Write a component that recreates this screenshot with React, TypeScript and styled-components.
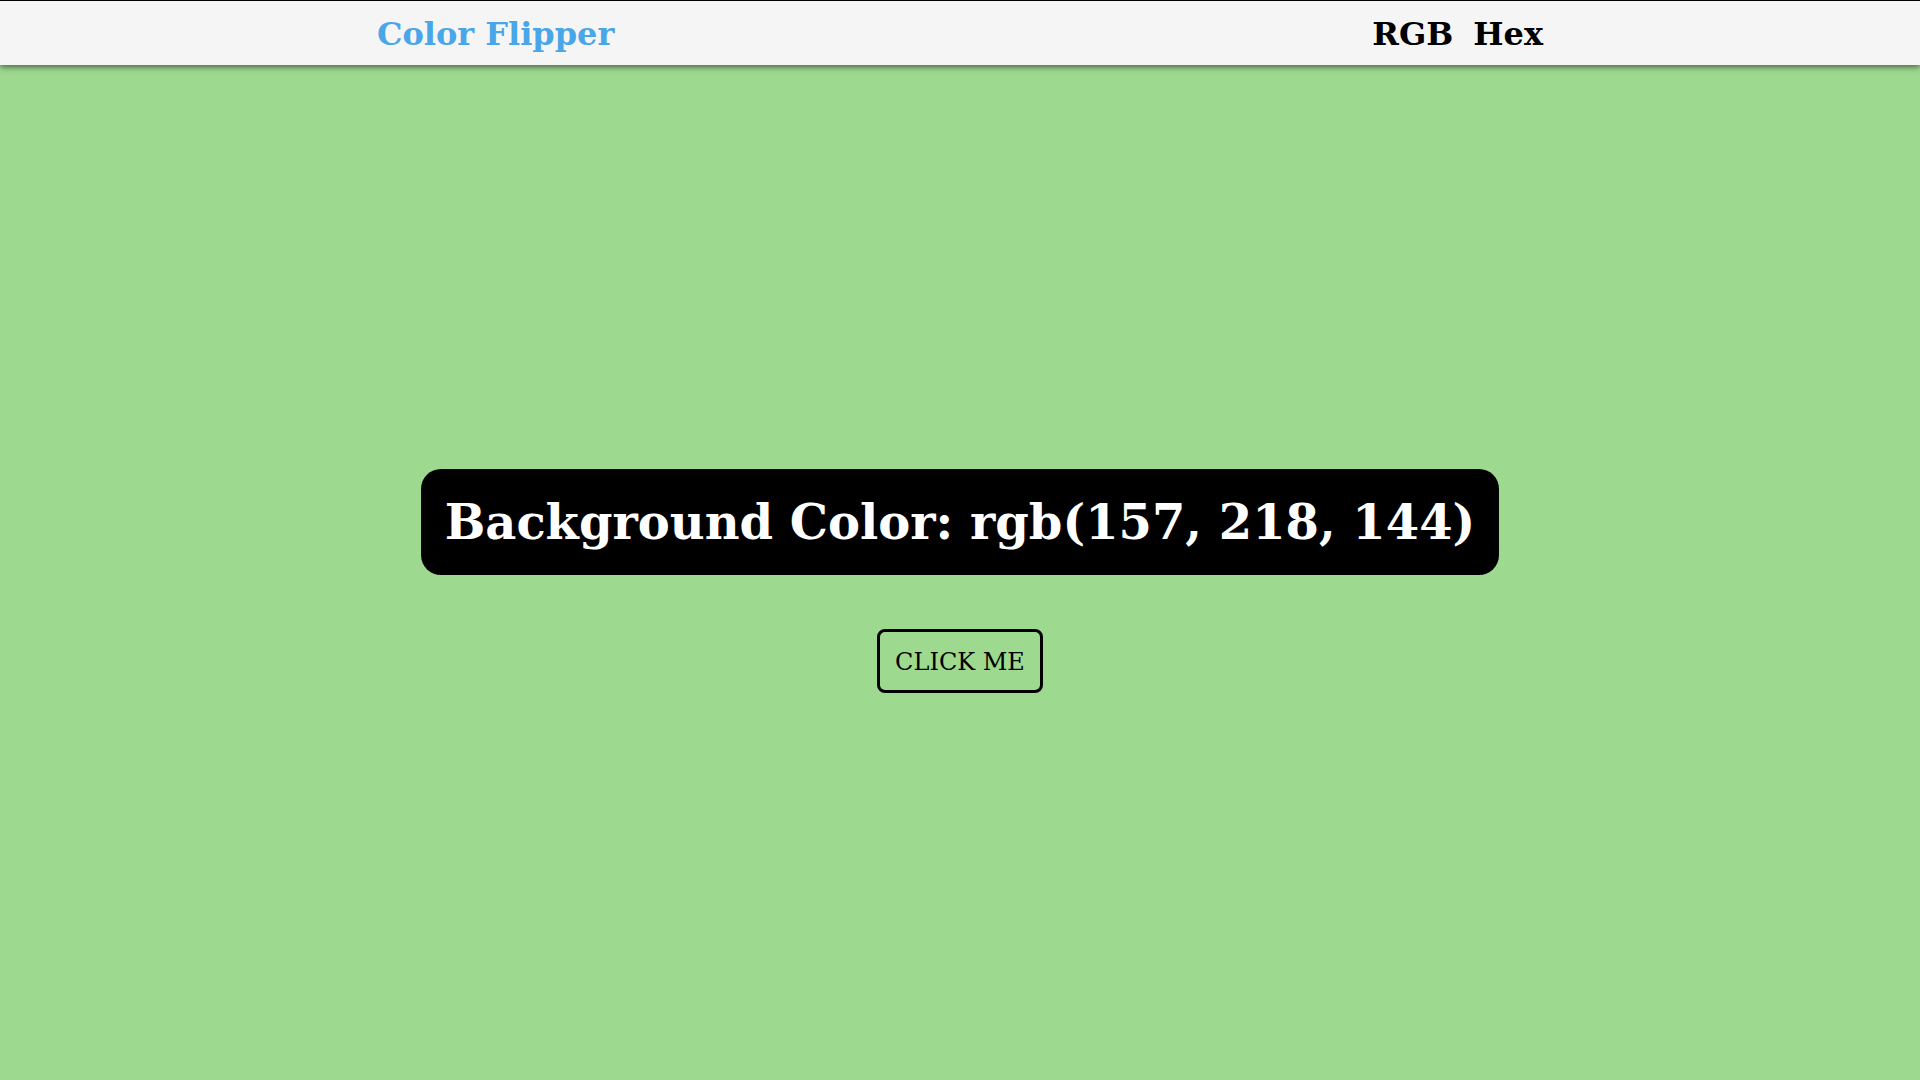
import React, { useState } from 'react';
import styled, { createGlobalStyle } from 'styled-components';

const GlobalStyle = createGlobalStyle`
    html, body {
        margin: 0;
        padding: 0;
        overflow: hidden;
    }
    body {
        font-family: "DejaVu Serif", serif;
    }
`;

const colors = [
    'rgb(157, 218, 144)',
    'rgb(233, 150, 122)',
    'rgb(135, 206, 235)',
    'rgb(240, 200, 110)',
];

export default function App() {
    const [index, setIndex] = useState(0);
    const color = colors[index];

    return (
        <Page $bg={color}>
            <GlobalStyle />
            {/* Navbar */}
            <Nav>
                <NavCenter>
                    <Brand>Color Flipper</Brand>
                    <Links>
                        <NavLink href="#">RGB</NavLink>
                        <NavLink href="#">Hex</NavLink>
                    </Links>
                </NavCenter>
            </Nav>
            {/* Main */}
            <Main>
                <Container>
                    <Heading>Background Color: {color}</Heading>
                    <FlipButton onClick={() => setIndex((index + 1) % colors.length)}>
                        CLICK ME
                    </FlipButton>
                </Container>
            </Main>
        </Page>
    );
}

const Page = styled.div<{ $bg: string }>`
    background: ${(props) => props.$bg};
    min-height: 100vh;
`;

const Nav = styled.nav`
    background: #f5f5f5;
    border-top: 1px solid #000;
    box-shadow: 0 2px 6px rgba(0, 0, 0, 0.55);
    position: relative;
`;

const NavCenter = styled.div`
    width: 90vw;
    max-width: 1166px;
    margin: 0 auto;
    height: 64px;
    padding-top: 2px;
    box-sizing: border-box;
    display: flex;
    justify-content: space-between;
    align-items: center;
`;

const Brand = styled.h4`
    margin: 0;
    font-size: 32px;
    font-weight: bold;
    color: #49a6e9;
`;

const Links = styled.div`
    display: flex;
    gap: 20px;
    margin-left: 0;
`;

const NavLink = styled.a`
    font-size: 32px;
    font-weight: bold;
    color: #000;
    text-decoration: none;
`;

const Main = styled.main`
    min-height: calc(100vh - 48px);
    display: grid;
    place-items: center;
`;

const Container = styled.div`
    display: flex;
    flex-direction: column;
    align-items: center;
    gap: 54px;
`;

const Heading = styled.h2`
    margin: 0;
    background: #000;
    color: #fff;
    font-size: 48px;
    font-weight: bold;
    line-height: 60px;
    padding: 23px 24px;
    border-radius: 20px;
`;

const FlipButton = styled.button`
    font-family: "DejaVu Serif", serif;
    font-size: 24px;
    color: #000;
    background: transparent;
    border: 3px solid #000;
    border-radius: 8px;
    height: 64px;
    padding: 2px 15px 0;
    cursor: pointer;
`;
